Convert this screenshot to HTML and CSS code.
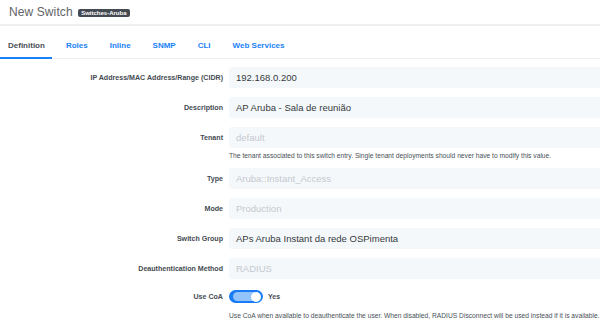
FILE: index.html
```html
<!DOCTYPE html>
<html>
<head>
<meta charset="utf-8">
<link rel="stylesheet" href="styles.css">
</head>
<body>
<div class="header">
  <span class="title">New Switch</span>
  <span class="badge">Switches-Aruba</span>
</div>
<nav class="tabs">
  <a class="tab active">Definition</a>
  <a class="tab">Roles</a>
  <a class="tab">Inline</a>
  <a class="tab">SNMP</a>
  <a class="tab">CLI</a>
  <a class="tab">Web Services</a>
</nav>
<div class="form">
  <div class="row">
    <div class="label">IP Address/MAC Address/Range (CIDR)</div>
    <div class="input">192.168.0.200</div>
  </div>
  <div class="row">
    <div class="label">Description</div>
    <div class="input">AP Aruba - Sala de reunião</div>
  </div>
  <div class="row">
    <div class="label">Tenant</div>
    <div class="input muted">default</div>
  </div>
  <div class="help">The tenant associated to this switch entry. Single tenant deployments should never have to modify this value.</div>
  <div class="row">
    <div class="label">Type</div>
    <div class="input muted">Aruba::Instant_Access</div>
  </div>
  <div class="row">
    <div class="label">Mode</div>
    <div class="input muted">Production</div>
  </div>
  <div class="row">
    <div class="label">Switch Group</div>
    <div class="input">APs Aruba Instant da rede OSPimenta</div>
  </div>
  <div class="row">
    <div class="label">Deauthentication Method</div>
    <div class="input muted">RADIUS</div>
  </div>
  <div class="row toggle-row">
    <div class="label">Use CoA</div>
    <div class="toggle-wrap">
      <span class="toggle"><span class="track"></span><span class="knob"></span></span>
      <span class="yes">Yes</span>
    </div>
  </div>
  <div class="help help-last">Use CoA when available to deauthenticate the user. When disabled, RADIUS Disconnect will be used instead if it is available.</div>
</div>
</body>
</html>
```
FILE: styles.css
```css
html, body {
  margin: 0;
  padding: 0;
  background: #fff;
  overflow: hidden;
}
body {
  width: 600px;
  font-family: "Liberation Sans", Arial, sans-serif;
  color: #495057;
}
.header {
  height: 24px;
  padding: 0 9px;
  display: flex;
  align-items: center;
  border-bottom: 2px solid #efefef;
  box-sizing: content-box;
}
.title {
  font-size: 12px;
  color: #5f6368;
  line-height: 14px;
  letter-spacing: 0.1px;
}
.badge {
  margin-left: 5px;
  margin-top: 2px;
  background: #454b52;
  color: #fff;
  font-size: 6px;
  font-weight: bold;
  line-height: 7px;
  padding: 0.5px 3.5px;
  border-radius: 2px;
}
.tabs {
  display: flex;
  margin-top: 8px;
  border-bottom: 1px solid #efefef;
}
.tab {
  font-size: 8px;
  font-weight: bold;
  line-height: 10px;
  padding: 7px 11px 6px;
  color: #1a82f7;
  border-bottom: 2px solid transparent;
  margin-bottom: -1px;
}
.tab.active {
  color: #495057;
  padding-left: 8px;
  padding-right: 7px;
  margin-right: 3px;
  border-bottom-color: #1a82f7;
}
.form {
  padding-top: 8px;
  margin-right: -20px;
}
.row {
  display: grid;
  grid-template-columns: 223px 1fr;
  column-gap: 6px;
  align-items: center;
  margin-bottom: 9px;
}
.label {
  text-align: right;
  font-size: 7.1px;
  font-weight: bold;
  color: #454b52;
}
.input {
  height: 21px;
  line-height: 21px;
  background: #f5f8fb;
  border-radius: 3px;
  padding-left: 7px;
  font-size: 9.5px;
  color: #343a40;
}
.input.muted {
  color: #c4c9cf;
}
.help {
  margin: -6px 0 8px 229px;
  font-size: 6.7px;
  line-height: 9px;
  color: #495057;
}
.toggle-row {
  height: 17px;
  margin-top: 9px;
  margin-bottom: 6px;
}
.toggle-wrap {
  display: flex;
  align-items: center;
}
.toggle {
  position: relative;
  width: 34px;
  height: 13px;
  border-radius: 7px;
  background: #1a7cf5;
  display: inline-block;
}
.track {
  position: absolute;
  left: 4px;
  top: 2px;
  width: 24px;
  height: 9px;
  border-radius: 5px;
  background: #93c3fb;
}
.knob {
  position: absolute;
  right: 2px;
  top: 1.5px;
  width: 10px;
  height: 10px;
  border-radius: 50%;
  background: #fff;
}
.yes {
  margin-left: 5px;
  font-size: 7px;
  font-weight: bold;
  color: #454b52;
}
.help-last {
  margin-top: 0;
}
```
